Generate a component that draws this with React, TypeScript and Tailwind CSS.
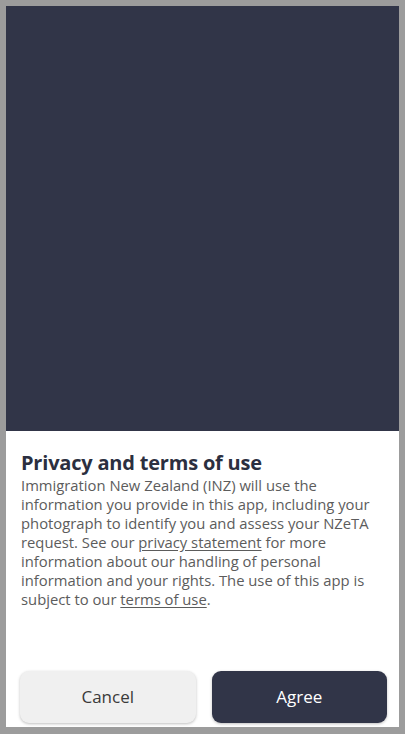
import React from 'react'

const App: React.FC = () => {
  return (
    <div
      className="w-[405px] h-[734px] bg-[#9c9c9c] pt-[6px] pl-[6px] pr-[6px] pb-[7px] flex flex-col"
      style={{ fontFamily: '"Open Sans", "Noto Sans", sans-serif' }}
    >
      <div className="h-[425px] bg-[#313548] shrink-0" />
      <div className="flex-1 bg-white flex flex-col">
        <div className="pl-[15px] pr-[14px] pt-[19px]">
          <h1 className="text-[20px] leading-[25px] font-bold text-[#2b2f40] tracking-[-0.2px]">
            Privacy and terms of use
          </h1>
          <p className="text-[14.8px] leading-[19px] text-[#5c5c5c] mt-[1px]">
            Immigration New Zealand (INZ) will use the information you provide in this app, including your
            photograph to identify you and assess your NZeTA request. See our{' '}
            <a className="underline underline-offset-2">privacy statement</a> for more information about our
            handling of personal information and your rights. The use of this app is subject to our{' '}
            <a className="underline underline-offset-2">terms of use</a>.
          </p>
        </div>
        <div className="mt-auto flex gap-4 pl-[14px] pr-[12px] pb-[4px]">
          <button className="flex-1 h-[52px] rounded-[9px] bg-[#f0f0f0] text-[17px] text-[#3a3a3a] shadow-[0_1px_3px_rgba(0,0,0,0.25)]">
            Cancel
          </button>
          <button className="flex-1 h-[52px] rounded-[9px] bg-[#313548] text-[17px] text-white shadow-[0_1px_3px_rgba(0,0,0,0.25)]">
            Agree
          </button>
        </div>
      </div>
    </div>
  )
}

export default App
